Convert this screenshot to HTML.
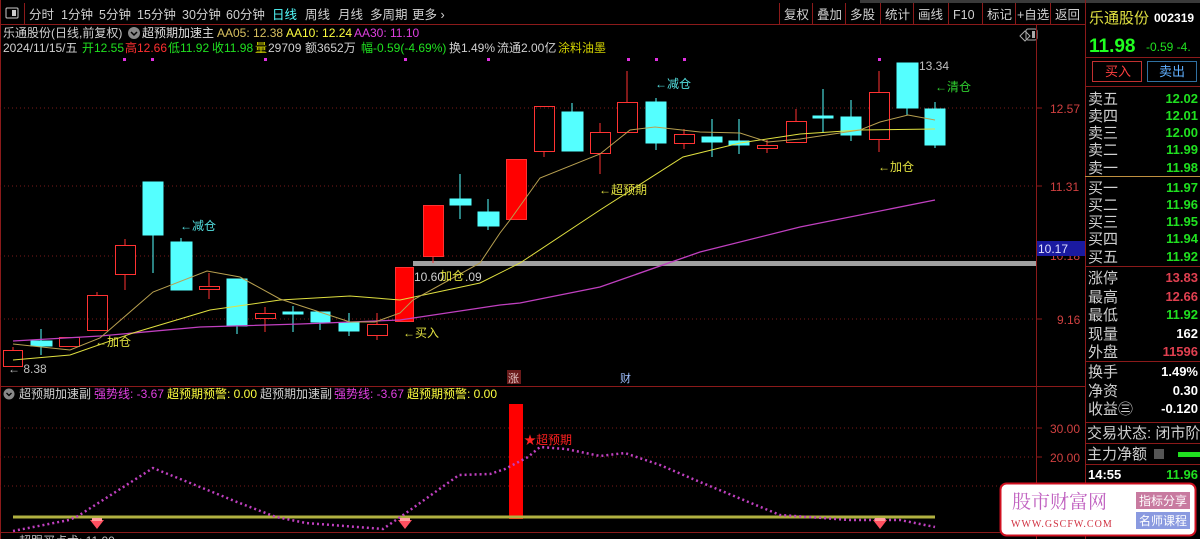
<!DOCTYPE html>
<html><head><meta charset="utf-8"><style>
html,body{margin:0;padding:0;background:#000;width:1200px;height:539px;overflow:hidden}
svg{display:block;font-family:"Liberation Sans","Noto Sans CJK SC",sans-serif}
</style></head><body>
<svg width="1200" height="539" viewBox="0 0 1200 539" xmlns="http://www.w3.org/2000/svg">
<rect width="1200" height="539" fill="#000"/>
<rect x="860" y="0" width="340" height="3" fill="#3a3a3a"/>
<!-- top menu -->
<line x1="0" y1="24.5" x2="1085" y2="24.5" stroke="#8b1a1a"/>
<line x1="0.5" y1="0" x2="0.5" y2="539" stroke="#8b1a1a"/>
<rect x="6" y="8" width="12" height="10" fill="none" stroke="#ccc" rx="1"/><rect x="12" y="10" width="4" height="6" fill="#ccc"/>
<line x1="24.5" y1="3" x2="24.5" y2="24" stroke="#8b1a1a"/>
<g font-size="12.5" fill="#d0d0d0">
<text x="29" y="19">分时</text><text x="61" y="19">1分钟</text><text x="99" y="19">5分钟</text><text x="137" y="19">15分钟</text><text x="182" y="19">30分钟</text><text x="226" y="19">60分钟</text>
<text x="272" y="19" fill="#54ffff">日线</text><text x="305" y="19">周线</text><text x="338" y="19">月线</text><text x="370" y="19">多周期</text><text x="412" y="19">更多 ›</text>
<text x="784" y="19">复权</text><text x="817" y="19">叠加</text><text x="850" y="19">多股</text><text x="885" y="19">统计</text><text x="918" y="19">画线</text><text x="953" y="19">F10</text><text x="987" y="19">标记</text><text x="1017" y="19">+自选</text><text x="1055" y="19">返回</text>
</g>
<g stroke="#8b1a1a"><line x1="779.5" y1="3" x2="779.5" y2="24"/><line x1="812.5" y1="3" x2="812.5" y2="24"/><line x1="845.5" y1="3" x2="845.5" y2="24"/><line x1="880.5" y1="3" x2="880.5" y2="24"/><line x1="913.5" y1="3" x2="913.5" y2="24"/><line x1="948.5" y1="3" x2="948.5" y2="24"/><line x1="982.5" y1="3" x2="982.5" y2="24"/><line x1="1015.5" y1="3" x2="1015.5" y2="24"/><line x1="1050.5" y1="3" x2="1050.5" y2="24"/></g>
<!-- info rows -->
<g font-size="12">
<text x="3" y="37" fill="#d0d0d0">乐通股份(日线,前复权)</text>
<circle cx="134" cy="33" r="6" fill="#888"/><path d="M131 32 l3 3 l3 -3" stroke="#000" stroke-width="1.5" fill="none"/>
<text x="142" y="37" fill="#e0e0e0">超预期加速主</text>
<text x="217" y="37" fill="#d8c060">AA05: 12.38</text><text x="286" y="37" fill="#ffff40">AA10: 12.24</text><text x="354" y="37" fill="#e040e0">AA30: 11.10</text>
<text x="3" y="52" fill="#d0d0d0">2024/11/15/五</text>
<text x="82" y="52" fill="#20e020">开12.55</text><text x="125" y="52" fill="#ff3030">高12.66</text><text x="168" y="52" fill="#20e020">低11.92</text><text x="212" y="52" fill="#20e020">收11.98</text><text x="255" y="52" fill="#d0d000">量</text><text x="268" y="52" fill="#d0d0d0">29709</text><text x="305" y="52" fill="#d0d0d0">额3652万</text><text x="361" y="52" fill="#20e020">幅-0.59(-4.69%)</text><text x="449" y="52" fill="#d0d0d0">换1.49%</text><text x="497" y="52" fill="#d0d0d0">流通2.00亿</text><text x="558" y="52" fill="#d0d000">涂料油墨</text>
</g>
<path d="M1020 36 l5 -5 l5 5 l-5 5z" fill="none" stroke="#aaa"/><rect x="1026" y="29" width="11" height="11" rx="2" fill="none" stroke="#aaa"/><rect x="1032" y="31" width="3" height="7" fill="#aaa"/>
<!-- axes -->
<line x1="1036.5" y1="24" x2="1036.5" y2="539" stroke="#8b1a1a"/>
<line x1="1085.5" y1="0" x2="1085.5" y2="539" stroke="#8b1a1a"/>
<line x1="0" y1="386.5" x2="1085" y2="386.5" stroke="#8b1a1a"/>
<line x1="0" y1="532.5" x2="1085" y2="532.5" stroke="#8b1a1a"/>
<g stroke="#7a1a1a" stroke-dasharray="1 3"><line x1="0" y1="108" x2="1036" y2="108"/><line x1="0" y1="186" x2="1036" y2="186"/><line x1="0" y1="256" x2="1036" y2="256"/><line x1="0" y1="319" x2="1036" y2="319"/>
<line x1="0" y1="428" x2="1036" y2="428"/><line x1="0" y1="457" x2="1036" y2="457"/><line x1="0" y1="486" x2="1036" y2="486"/></g>
<g stroke="#8b1a1a"><line x1="1036" y1="108" x2="1042" y2="108"/><line x1="1036" y1="186" x2="1042" y2="186"/><line x1="1036" y1="319" x2="1042" y2="319"/><line x1="1036" y1="428" x2="1042" y2="428"/><line x1="1036" y1="457" x2="1042" y2="457"/></g>
<g font-size="12" fill="#d04040"><text x="1050" y="113">12.57</text><text x="1050" y="191">11.31</text><text x="1057" y="324">9.16</text><text x="1050" y="433">30.00</text><text x="1050" y="462">20.00</text><text x="1050" y="260">10.18</text></g>
<rect x="1037" y="241" width="48" height="15" fill="#1a1aa0"/><text x="1038" y="253" font-size="12" fill="#e0e0ff">10.17</text>
<!-- gray bar -->
<rect x="413" y="261" width="623" height="5" fill="#a0a0a0"/>
<!-- magenta dots top -->
<g fill="#e030e0"><rect x="123" y="58" width="3" height="3"/><rect x="151" y="58" width="3" height="3"/><rect x="264" y="58" width="3" height="3"/><rect x="404" y="58" width="3" height="3"/><rect x="487" y="58" width="3" height="3"/><rect x="627" y="58" width="3" height="3"/><rect x="655" y="58" width="3" height="3"/><rect x="683" y="58" width="3" height="3"/><rect x="878" y="58" width="3" height="3"/></g>
<!-- candles -->
<g stroke-width="1">
<g stroke="#ff3232" fill="none">
<line x1="13" y1="347" x2="13" y2="350"/><rect x="3.5" y="350.5" width="19" height="16"/>
<rect x="59.5" y="337.5" width="20" height="9"/>
<line x1="97" y1="292" x2="97" y2="295"/><rect x="87.5" y="295.5" width="20" height="35"/>
<line x1="125" y1="239" x2="125" y2="290"/><rect x="115.5" y="245.5" width="20" height="29" fill="#000"/>
<line x1="209" y1="273" x2="209" y2="299"/><rect x="199.5" y="286.5" width="20" height="3" fill="#000"/>
<line x1="265" y1="307" x2="265" y2="332"/><rect x="255.5" y="313.5" width="20" height="5" fill="#000"/>
<line x1="377" y1="313" x2="377" y2="340"/><rect x="367.5" y="324.5" width="20" height="11" fill="#000"/>
<line x1="544" y1="151" x2="544" y2="157"/><rect x="534.5" y="106.5" width="20" height="45"/>
<line x1="600" y1="123" x2="600" y2="174"/><rect x="590.5" y="132.5" width="20" height="21" fill="#000"/>
<line x1="627" y1="71" x2="627" y2="132"/><rect x="617.5" y="102.5" width="20" height="30" fill="#000"/>
<line x1="684" y1="129" x2="684" y2="149"/><rect x="674.5" y="134.5" width="20" height="9" fill="#000"/>
<line x1="767" y1="140" x2="767" y2="153"/><rect x="757.5" y="145.5" width="20" height="3" fill="#000"/>
<line x1="796" y1="109" x2="796" y2="142"/><rect x="786.5" y="121.5" width="20" height="21" fill="#000"/>
<line x1="879" y1="71" x2="879" y2="152"/><rect x="869.5" y="92.5" width="20" height="47" fill="#000"/>
</g>
<g fill="#ff0000" stroke="#ff3232">
<rect x="395.5" y="267.5" width="18" height="54"/>
<line x1="433" y1="256" x2="433" y2="263"/><rect x="423.5" y="205.5" width="20" height="51"/>
<rect x="506.5" y="159.5" width="20" height="60"/>
</g>
<g stroke="#54ffff" fill="#54ffff">
<line x1="41" y1="329" x2="41" y2="355"/><rect x="31" y="341" width="21" height="5"/>
<line x1="153" y1="235" x2="153" y2="273"/><rect x="143" y="182" width="20" height="53"/>
<line x1="181" y1="238" x2="181" y2="242"/><rect x="171" y="242" width="21" height="48"/>
<line x1="237" y1="326" x2="237" y2="334"/><rect x="227" y="279" width="20" height="47"/>
<line x1="293" y1="306" x2="293" y2="332"/><rect x="283" y="312" width="20" height="2"/>
<line x1="320" y1="322" x2="320" y2="330"/><rect x="311" y="312" width="19" height="10"/>
<line x1="349" y1="313" x2="349" y2="336"/><rect x="339" y="323" width="20" height="8"/>
<line x1="460" y1="174" x2="460" y2="219"/><rect x="450" y="199" width="21" height="6"/>
<line x1="488" y1="199" x2="488" y2="230"/><rect x="478" y="212" width="21" height="14"/>
<line x1="572" y1="103" x2="572" y2="112"/><rect x="562" y="112" width="21" height="39"/>
<line x1="656" y1="98" x2="656" y2="150"/><rect x="646" y="102" width="20" height="41"/>
<line x1="712" y1="119" x2="712" y2="157"/><rect x="702" y="137" width="20" height="5"/>
<line x1="739" y1="119" x2="739" y2="154"/><rect x="729" y="141" width="20" height="4"/>
<line x1="823" y1="89" x2="823" y2="133"/><rect x="813" y="116" width="20" height="2"/>
<line x1="851" y1="100" x2="851" y2="141"/><rect x="841" y="117" width="20" height="18"/>
<line x1="907" y1="108" x2="907" y2="115"/><rect x="897" y="63" width="21" height="45"/>
<line x1="935" y1="102" x2="935" y2="148"/><rect x="925" y="109" width="20" height="36"/>
</g>
</g>
<!-- MAs -->
<polyline fill="none" stroke="#c040c0" stroke-width="1.3" points="13,341 100,336 200,327 300,324 400,320 500,305 520,303 600,287 700,252 800,227 935,200"/>
<polyline fill="none" stroke="#e0e040" stroke-width="1" points="13,360 70,355 133,333 210,310 280,300 350,296 400,300 480,283 520,263 600,210 683,157 740,143 800,134 860,130 935,129"/>
<polyline fill="none" stroke="#b8a050" stroke-width="1" points="13,344 70,350 100,338 153,292 207,271 240,277 280,299 350,322 375,322 400,313 413,300 480,263 500,233 510,220 540,178 600,154 630,130 655,127 700,132 740,133 768,142 800,139 860,130 880,122 908,115 935,120"/>
<!-- labels -->
<g font-size="12">
<text x="8" y="373" fill="#c0c0c0">← 8.38</text>
<text x="95" y="346" fill="#e0e040">←加仓</text>
<text x="180" y="230" fill="#54e0e0">←减仓</text>
<text x="414" y="281" fill="#d0d0d0">10.60</text><text x="440" y="280" fill="#e0e040">加仓</text><text x="465" y="281" fill="#d0d0d0">.09</text>
<text x="403" y="337" fill="#e0e040">←买入</text>
<text x="599" y="194" fill="#e0e040">←超预期</text>
<text x="655" y="88" fill="#54e0e0">←减仓</text>
<text x="878" y="171" fill="#e0e040">←加仓</text>
<text x="919" y="70" fill="#c0c0c0">13.34</text>
<text x="935" y="91" fill="#30d030">←清仓</text>
</g>
<rect x="507" y="370" width="14" height="14" fill="#6a1a1a"/><text x="508" y="382" font-size="11" fill="#e0c0c0">涨</text>
<text x="620" y="382" font-size="11" fill="#a0c0ff">财</text>
<!-- sub panel -->
<circle cx="9" cy="394" r="5.5" fill="#888"/><path d="M6.5 393 l2.5 2.5 l2.5 -2.5" stroke="#000" stroke-width="1.3" fill="none"/>
<g font-size="12"><text x="19" y="398" fill="#d0d0d0">超预期加速副</text><text x="94" y="398" fill="#e040e0">强势线: -3.67</text><text x="167" y="398" fill="#ffff40">超预期预警: 0.00</text><text x="260" y="398" fill="#d0d0d0">超预期加速副</text><text x="334" y="398" fill="#e040e0">强势线: -3.67</text><text x="407" y="398" fill="#ffff40">超预期预警: 0.00</text></g>
<rect x="509" y="404" width="14" height="115" fill="#ff0000"/>
<text x="524" y="444" font-size="12" fill="#ff2020">★超预期</text>
<line x1="13" y1="517" x2="935" y2="517" stroke="#b0b040" stroke-width="3"/>
<polyline fill="none" stroke="#c040c0" stroke-width="2.5" stroke-dasharray="2 3" points="13,531 69,520 78,516 153,468 237,502 276,517 306,523 383,529 406,513 459,475 490,474 505,469 528,457 540,447 566,449 600,456 625,453 660,465 700,482 780,515 850,520 900,520 935,527"/>
<g fill="#ff5060"><path d="M90 520 h14 l-7 9z"/><path d="M398 520 h14 l-7 9z"/><path d="M873 520 h14 l-7 9z"/></g>
<g fill="#ffa0a0"><rect x="92" y="518" width="10" height="3"/><rect x="400" y="518" width="10" height="3"/><rect x="875" y="518" width="10" height="3"/></g>
<text x="19" y="545" font-size="12" fill="#c0c0c0">超跟买点术: 11.00</text>
<!-- right panel -->
<text x="1089" y="23" font-size="15" fill="#e0e040">乐通股份</text><text x="1154" y="22" font-size="12" font-weight="bold" fill="#fff">002319</text>
<text x="1089" y="52" font-size="19" font-weight="bold" fill="#20ff20">11.98</text><text x="1146" y="51" font-size="12" fill="#20e020">-0.59  -4.</text>
<line x1="1085" y1="57.5" x2="1200" y2="57.5" stroke="#8b1a1a"/>
<rect x="1092.5" y="61.5" width="49" height="20" fill="none" stroke="#c03030"/><text x="1105" y="76" font-size="13" fill="#ff4040">买入</text>
<rect x="1147.5" y="61.5" width="49" height="20" fill="none" stroke="#3070a0"/><text x="1159" y="76" font-size="13" fill="#60b0ff">卖出</text>
<line x1="1085" y1="86.5" x2="1200" y2="86.5" stroke="#8b1a1a"/>
<g font-size="15" fill="#d0d0d0">
<text x="1088" y="104">卖五</text><text x="1088" y="121">卖四</text><text x="1088" y="138">卖三</text><text x="1088" y="155">卖二</text><text x="1088" y="173">卖一</text>
<text x="1088" y="193">买一</text><text x="1088" y="210">买二</text><text x="1088" y="227">买三</text><text x="1088" y="244">买四</text><text x="1088" y="262">买五</text>
<text x="1088" y="283">涨停</text><text x="1088" y="302">最高</text><text x="1088" y="320">最低</text><text x="1088" y="339">现量</text><text x="1088" y="357">外盘</text>
<text x="1088" y="377">换手</text><text x="1088" y="396">净资</text><text x="1088" y="414">收益㊂</text>
<text x="1087" y="438">交易状态: 闭市阶</text><text x="1087" y="459">主力净额</text>
</g>
<g font-size="13" font-weight="bold" text-anchor="end" fill="#20e020">
<text x="1198" y="103">12.02</text><text x="1198" y="120">12.01</text><text x="1198" y="137">12.00</text><text x="1198" y="154">11.99</text><text x="1198" y="172">11.98</text>
<text x="1198" y="192">11.97</text><text x="1198" y="209">11.96</text><text x="1198" y="226">11.95</text><text x="1198" y="243">11.94</text><text x="1198" y="261">11.92</text>
<text x="1198" y="282" fill="#e04050">13.83</text><text x="1198" y="301" fill="#e04050">12.66</text><text x="1198" y="319">11.92</text><text x="1198" y="338" fill="#fff">162</text><text x="1198" y="356" fill="#e04050">11596</text>
<text x="1198" y="376" fill="#fff">1.49%</text><text x="1198" y="395" fill="#fff">0.30</text><text x="1198" y="413" fill="#fff">-0.120</text>
<text x="1198" y="479">11.96</text>
</g>
<text x="1088" y="479" font-size="13" font-weight="bold" fill="#fff">14:55</text>
<line x1="1085" y1="176.5" x2="1200" y2="176.5" stroke="#c09040"/>
<g stroke="#8b1a1a"><line x1="1085" y1="266.5" x2="1200" y2="266.5"/><line x1="1085" y1="361.5" x2="1200" y2="361.5"/><line x1="1085" y1="422.5" x2="1200" y2="422.5"/><line x1="1085" y1="443.5" x2="1200" y2="443.5"/><line x1="1085" y1="464.5" x2="1200" y2="464.5"/></g>
<rect x="1154" y="449" width="10" height="10" fill="#555"/><rect x="1178" y="452" width="22" height="5" fill="#20e020"/>
<!-- watermark -->
<rect x="1000.5" y="483.5" width="195" height="52" rx="6" fill="#fff" stroke="#d01020" stroke-width="2"/>
<text x="1012" y="508" font-size="19" fill="#c060c0" font-family="Liberation Serif,Noto Serif CJK SC,serif">股市财富网</text>
<text x="1011" y="527" font-size="10" fill="#d03040" font-family="Liberation Serif,serif" letter-spacing="1">WWW.GSCFW.COM</text>
<rect x="1136" y="492" width="54" height="17" fill="#c87aa0"/><text x="1139" y="505" font-size="12" fill="#fff">指标分享</text>
<rect x="1136" y="512" width="54" height="17" fill="#8a9ae0"/><text x="1139" y="525" font-size="12" fill="#fff">名师课程</text>
</svg>
</body></html>
